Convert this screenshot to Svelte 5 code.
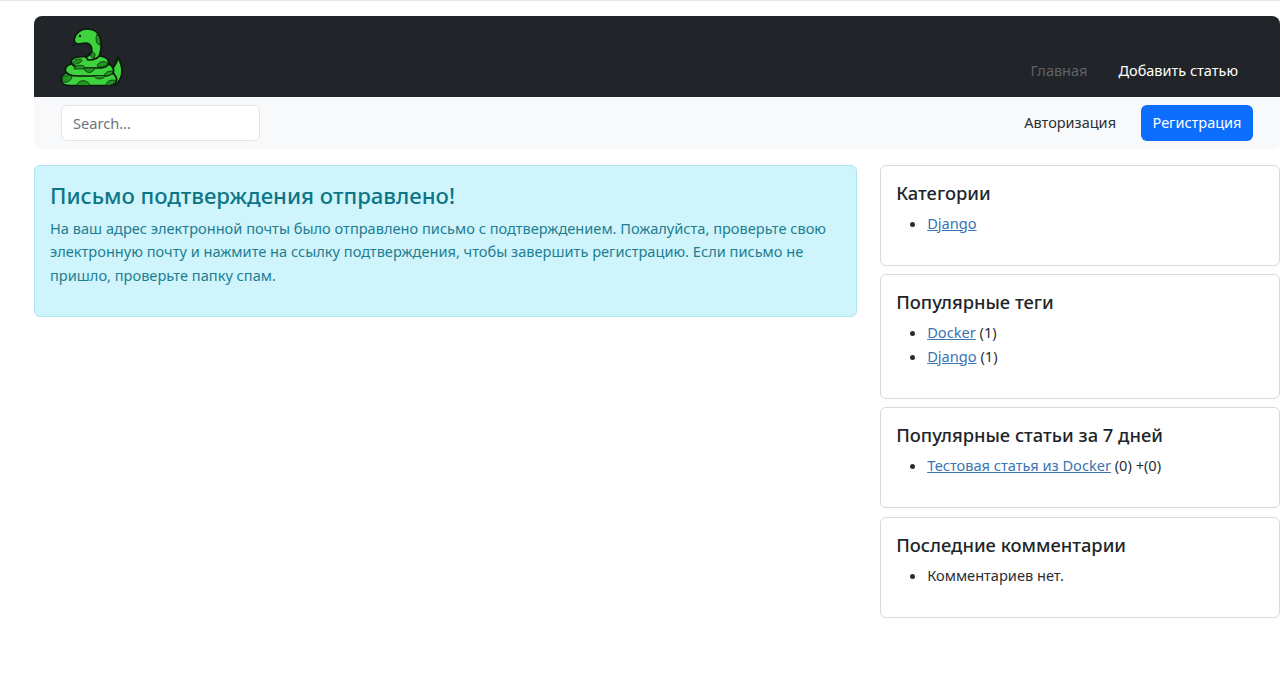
<script>
  const tags = [{ name: 'Docker', n: 1 }, { name: 'Django', n: 1 }];
</script>

<div class="page">
  <header class="head">
    <nav class="dark">
      <svg class="logo" viewBox="60 27 63 60" width="63" height="60" aria-label="logo">
        <g stroke="#0b1a0c" stroke-width="1.7" stroke-linejoin="round" fill="#3fd23f">
          <path d="M113 68 C116 64 118 61 118 57 C120 61 122 66 122 71 C122 77 119 82 115 85 Z" />
          <path d="M68 72 C62 74 60 78 62 82 C63 85 66 85.5 70 85.5 H108 C114 85.5 118 82 116 77 C114 73 110 72 106 72 Z" />
          <path d="M72 64 C66 65 64 69 66 72 C68 75 72 76 78 76 H104 C111 76 115 72 113 68 C111 64 107 63 102 63 Z" />
          <path d="M78 57 C72 58 70 61 72 64 C74 67 78 68 84 68 H100 C107 68 110 64 108 60 C106 57 102 56 98 56 Z" />
          <path d="M88 60 C95 60 99 58 100 54 C101.5 48 101.5 42 100 37 C98 32 93 29 87 29 C81 29 76 33 74.5 38 C73.5 41 75 44 78 44 C82 44 85 42 89 44 C92 46 92.5 50 91 53 C90 55 88 56 86 57 Z" />
        </g>
        <g fill="#1f9523" stroke="#0b1a0c" stroke-width="0.7">
          <path d="M97 34 C100 37 101 41 100 45 C96 45 95 38 97 34 Z" />
          <path d="M92 52 C95 52 96 55 94 58 C91 58 90 55 92 52 Z" />
          <path d="M74 69 C75 64 85 64 86 69 Z" />
          <path d="M97 66 C98 61 106 60 108 64 C105 67 100 68 97 66 Z" />
          <path d="M84 68 C85 74 93 74 95 68 Z" />
          <path d="M104 76 C105 71 112 70 113 72 C112 75 108 76.5 104 76 Z" />
          <path d="M72 64 C75 58 82 58 82 61 C80 63 76 65 72 64 Z" />
          <path d="M94 75.5 C95 80 103 80 106 75.5 Z" />
          <path d="M62 81 C62 75 70 73 72 77 C71 81 66 84 62 81 Z" />
          <path d="M77 85.5 C78 79 88 79 90 85.5 Z" />
          <path d="M106 85.5 C106 80 114 79 116 81 C115 84 111 85.5 106 85.5 Z" />
        </g>
        <path d="M77 43 L73 46 M75 45 L72 45" stroke="#0b1a0c" stroke-width="1.2" fill="none" />
        <circle cx="80" cy="36" r="1.2" fill="#0b1a0c" />
      </svg>
      <ul class="dark-links">
        <li class="muted">Главная</li>
        <li>Добавить статью</li>
      </ul>
    </nav>
    <div class="light">
      <input class="search" type="text" placeholder="Search..." />
      <div class="auth">
        <span class="login">Авторизация</span>
        <button class="register">Регистрация</button>
      </div>
    </div>
  </header>

  <main class="content">
    <section class="alert">
      <h4>Письмо подтверждения отправлено!</h4>
      <p>На ваш адрес электронной почты было отправлено письмо с подтверждением. Пожалуйста, проверьте свою электронную почту и нажмите на ссылку подтверждения, чтобы завершить регистрацию. Если письмо не пришло, проверьте папку спам.</p>
    </section>
    <aside class="side">
      <div class="card">
        <h5>Категории</h5>
        <ul><li><a href="#c">Django</a></li></ul>
      </div>
      <div class="card">
        <h5>Популярные теги</h5>
        <ul>
          {#each tags as t}
            <li><a href="#t">{t.name}</a> ({t.n})</li>
          {/each}
        </ul>
      </div>
      <div class="card">
        <h5>Популярные статьи за 7 дней</h5>
        <ul><li><a href="#a">Тестовая статья из Docker</a> (0) +(0)</li></ul>
      </div>
      <div class="card">
        <h5>Последние комментарии</h5>
        <ul><li>Комментариев нет.</li></ul>
      </div>
    </aside>
  </main>
</div>

<style>
  :global(body) {
    margin: 0;
    background: #fff;
    font-family: "Noto Sans", "Open Sans", sans-serif;
    font-size: 14.6px;
    line-height: 23.4px;
    color: #2b2f33;
  }
  .page {
    border-top: 1px solid #e6e6e6;
    padding: 15px 0 0 33.6px;
    height: 683px;
    overflow: hidden;
  }
  .dark {
    background: #212529;
    border-radius: 8px 8px 0 0;
    height: 81px;
    display: flex;
    justify-content: space-between;
    padding: 0 27px 0 26.4px;
    box-sizing: border-box;
  }
  .logo { margin-top: 11px; width: 63px; height: 60px; }
  .dark-links {
    list-style: none;
    margin: 0;
    padding: 43px 15px 0 0;
    display: flex;
    gap: 31px;
    color: #fff;
    font-size: 14.5px;
  }
  .muted { color: #5f6367; }
  .light {
    background: #f8f9fa;
    border-radius: 0 0 8px 8px;
    height: 52px;
    display: flex;
    align-items: flex-start;
    justify-content: space-between;
    padding: 8px 27px 0 27px;
    box-sizing: border-box;
  }
  .search {
    width: 199.4px;
    height: 36px;
    box-sizing: border-box;
    border: 1px solid #e1e4e8;
    border-radius: 6px;
    padding: 0 11.4px;
    font: inherit;
    background: #fff;
  }
  .search::placeholder { color: #6c757d; }
  .auth { display: flex; align-items: center; gap: 25px; height: 36px; font-size: 14.5px; }
  .register {
    width: 112px;
    height: 36px;
    background: #0d6efd;
    border: 0;
    border-radius: 6px;
    color: #fff;
    font: inherit;
    padding: 0;
  }
  .content {
    display: grid;
    grid-template-columns: 823.4px 400px;
    column-gap: 23.2px;
    margin-top: 15.7px;
    align-items: start;
  }
  .alert {
    background: #cff4fc;
    border: 1px solid #aee5f1;
    border-radius: 6px;
    height: 152.5px;
    box-sizing: border-box;
    padding: 14px 15.4px;
    color: #1d7f91;
  }
  .alert h4 {
    margin: 0 0 7px;
    font-size: 22.15px;
    line-height: 30px;
    font-weight: 500;
    color: #0c7687;
  }
  .alert p { margin: 0; line-height: 23.5px; }
  .side { display: flex; flex-direction: column; gap: 8.7px; }
  .card {
    border: 1px solid #d9d9d9;
    border-radius: 6px;
    padding: 15px 15px 29.6px;
    box-sizing: border-box;
  }
  .card h5 {
    margin: 0 0 7px;
    font-size: 18.35px;
    line-height: 24px;
    font-weight: 500;
    color: #212529;
  }
  .card ul { margin: 0; padding-left: 31px; }
  .card a { color: #3a74b4; }
</style>
